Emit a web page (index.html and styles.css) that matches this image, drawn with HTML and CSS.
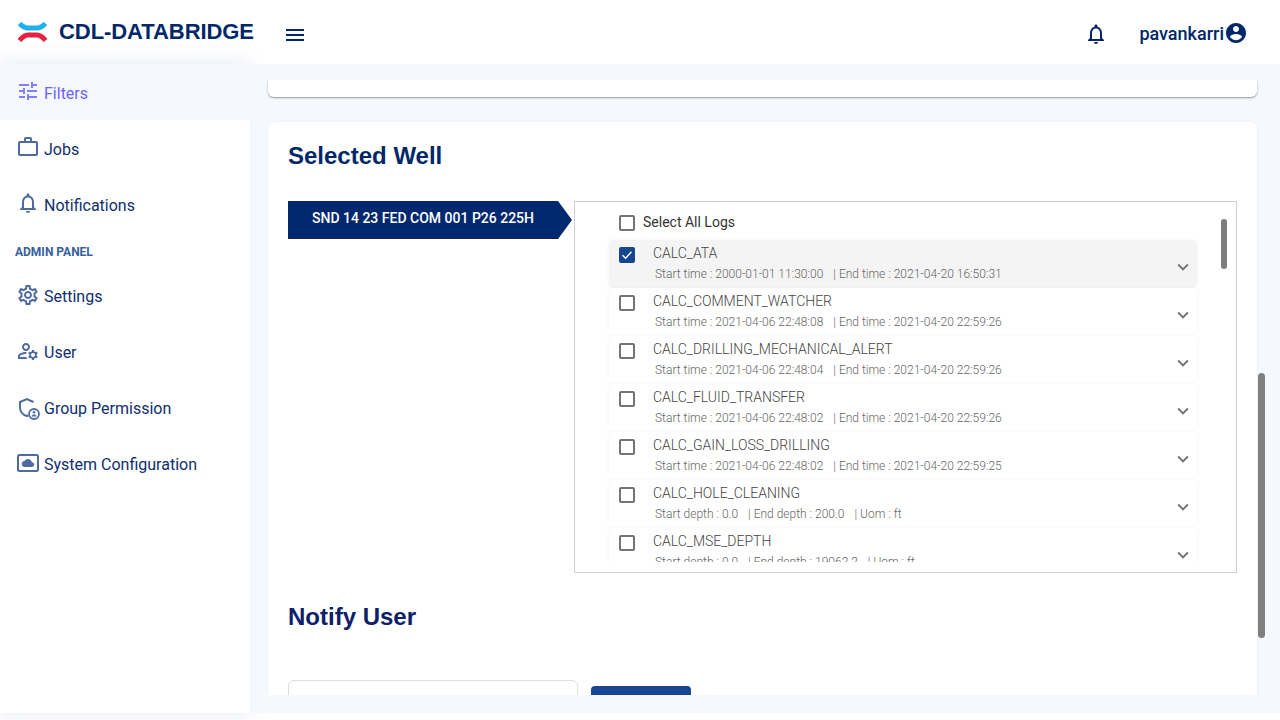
FILE: index.html
```html
<!DOCTYPE html>
<html lang="en">
<head>
    <meta charset="UTF-8">
    <meta name="viewport" content="width=device-width, initial-scale=1.0">
    <title>CDL-DATABRIDGE</title>
    <link rel="stylesheet" href="styles.css">
</head>
<body>
    <header class="topbar">
        <div class="brand">
            <svg class="logo" viewBox="0 0 31 24">
                <path class="logo-top" d="M2.5 3.5 Q7 8 11 8 H20 Q24 8 28.5 3.5"/>
                <path class="logo-bottom" d="M2.5 20.5 Q7 15 11 15 H20 Q24 15 28.5 20.5"/>
            </svg>
            <span class="brand-name">CDL-DATABRIDGE</span>
        </div>
        <svg class="menu-icon" viewBox="0 0 24 24"><path d="M3 18h18v-2H3v2zm0-5h18v-2H3v2zm0-7v2h18V6H3z"/></svg>
        <div class="topbar-right">
            <svg class="top-bell" viewBox="0 0 24 24"><path d="M12 22c1.1 0 2-.9 2-2h-4c0 1.1.9 2 2 2zm6-6v-5c0-3.07-1.63-5.64-4.5-6.32V4c0-.83-.67-1.5-1.5-1.5s-1.5.67-1.5 1.5v.68C7.64 5.36 6 7.92 6 11v5l-2 2v1h16v-1l-2-2zm-2 1H8v-6c0-2.48 1.51-4.5 4-4.5s4 2.02 4 4.5v6z"/></svg>
            <div class="account">
                <span>pavankarri</span>
                <svg viewBox="0 0 24 24"><path d="M12 2C6.48 2 2 6.48 2 12s4.48 10 10 10 10-4.48 10-10S17.52 2 12 2zm0 3c1.66 0 3 1.34 3 3s-1.34 3-3 3-3-1.34-3-3 1.34-3 3-3zm0 14.2c-2.5 0-4.71-1.28-6-3.22.03-1.99 4-3.08 6-3.08 1.99 0 5.97 1.09 6 3.08-1.29 1.94-3.5 3.22-6 3.22z"/></svg>
            </div>
        </div>
    </header>

    <div class="shell">
        <nav class="sidebar">
            <a class="nav-item upper active">
                <svg viewBox="0 0 24 24"><path d="M3 17v2h6v-2H3zM3 5v2h10V5H3zm10 16v-2h8v-2h-8v-2h-2v6h2zM7 9v2H3v2h4v2h2V9H7zm14 4v-2H11v2h10zm-6-4h2V7h4V5h-4V3h-2v6z"/></svg>
                Filters
            </a>
            <a class="nav-item upper">
                <svg viewBox="0 0 24 24"><path d="M14 6V4h-4v2h4zM4 8v11h16V8H4zm16-2c1.11 0 2 .89 2 2v11c0 1.11-.89 2-2 2H4c-1.11 0-2-.89-2-2l.01-11c0-1.11.88-2 1.99-2h4V4c0-1.11.89-2 2-2h4c1.11 0 2 .89 2 2v2h4z"/></svg>
                Jobs
            </a>
            <a class="nav-item upper">
                <svg viewBox="0 0 24 24"><path d="M12 22c1.1 0 2-.9 2-2h-4c0 1.1.9 2 2 2zm6-6v-5c0-3.07-1.63-5.64-4.5-6.32V4c0-.83-.67-1.5-1.5-1.5s-1.5.67-1.5 1.5v.68C7.64 5.36 6 7.92 6 11v5l-2 2v1h16v-1l-2-2zm-2 1H8v-6c0-2.48 1.51-4.5 4-4.5s4 2.02 4 4.5v6z"/></svg>
                Notifications
            </a>
            <div class="nav-label">ADMIN PANEL</div>
            <a class="nav-item">
                <svg viewBox="0 0 24 24"><path d="M19.43 12.98c.04-.32.07-.64.07-.98 0-.34-.03-.66-.07-.98l2.11-1.65c.19-.15.24-.42.12-.64l-2-3.46c-.09-.16-.26-.25-.44-.25-.06 0-.12.01-.17.03l-2.49 1c-.52-.4-1.08-.73-1.69-.98l-.38-2.65C14.46 2.18 14.25 2 14 2h-4c-.25 0-.46.18-.49.42l-.38 2.65c-.61.25-1.17.59-1.69.98l-2.49-1c-.06-.02-.12-.03-.18-.03-.17 0-.34.09-.43.25l-2 3.46c-.13.22-.07.49.12.64l2.11 1.65c-.04.32-.07.65-.07.98 0 .33.03.66.07.98l-2.11 1.65c-.19.15-.24.42-.12.64l2 3.46c.09.16.26.25.44.25.06 0 .12-.01.17-.03l2.49-1c.52.4 1.08.73 1.69.98l.38 2.65c.03.24.24.42.49.42h4c.25 0 .46-.18.49-.42l.38-2.65c.61-.25 1.17-.59 1.69-.98l2.49 1c.06.02.12.03.18.03.17 0 .34-.09.43-.25l2-3.46c.12-.22.07-.49-.12-.64l-2.11-1.65zm-1.98-1.71c.04.31.05.52.05.73 0 .21-.02.43-.05.73l-.14 1.13.89.7 1.08.84-.7 1.21-1.27-.51-1.04-.42-.9.68c-.43.32-.84.56-1.25.73l-1.06.43-.16 1.13-.2 1.35h-1.4l-.19-1.35-.16-1.13-1.06-.43c-.43-.18-.83-.41-1.23-.71l-.91-.7-1.06.43-1.27.51-.7-1.21 1.08-.84.89-.7-.14-1.13c-.03-.31-.05-.54-.05-.74s.02-.43.05-.73l.14-1.13-.89-.7-1.08-.84.7-1.21 1.27.51 1.04.42.9-.68c.43-.32.84-.56 1.25-.73l1.06-.43.16-1.13.2-1.35h1.39l.19 1.35.16 1.13 1.06.43c.43.18.83.41 1.23.71l.91.7 1.06-.43 1.27-.51.7 1.21-1.07.85-.89.7.14 1.13zM12 8c-2.21 0-4 1.79-4 4s1.79 4 4 4 4-1.79 4-4-1.79-4-4-4zm0 6c-1.1 0-2-.9-2-2s.9-2 2-2 2 .9 2 2-.9 2-2 2z"/></svg>
                Settings
            </a>
            <a class="nav-item">
                <svg viewBox="0 0 24 24"><path d="M4 18v-.65c0-.34.16-.66.41-.81C6.1 15.53 8.03 15 10 15c.03 0 .05 0 .08.01.1-.7.3-1.37.59-1.98-.22-.02-.44-.03-.67-.03-2.42 0-4.68.67-6.61 1.82-.88.52-1.39 1.5-1.39 2.53V20h9.26c-.42-.6-.75-1.28-.97-2H4zm6-6c2.21 0 4-1.79 4-4s-1.79-4-4-4-4 1.79-4 4 1.79 4 4 4zm0-6c1.1 0 2 .9 2 2s-.9 2-2 2-2-.9-2-2 .9-2 2-2zm10.75 10c0-.22-.03-.42-.06-.63l1.14-1.01-1-1.73-1.45.49c-.32-.27-.68-.48-1.08-.63L18 11h-2l-.3 1.49c-.4.15-.76.36-1.08.63l-1.45-.49-1 1.73 1.14 1.01c-.03.21-.06.41-.06.63s.03.42.06.63l-1.14 1.01 1 1.73 1.45-.49c.32.27.68.48 1.08.63L16 21h2l.3-1.49c.4-.15.76-.36 1.08-.63l1.45.49 1-1.73-1.14-1.01c.03-.21.06-.41.06-.63zM17 18c-1.1 0-2-.9-2-2s.9-2 2-2 2 .9 2 2-.9 2-2 2z"/></svg>
                User
            </a>
            <a class="nav-item">
                <svg class="icon-group" viewBox="0 0 24 24">
                    <path fill="none" stroke="currentColor" stroke-width="2" d="M17.5 6 L11 3 L4 6 V11.2 C4 15.4 6.8 19 11 20 L12.5 19.5"/>
                    <circle cx="18" cy="18" r="5" fill="none" stroke="currentColor" stroke-width="1.8"/>
                    <circle cx="18" cy="16.3" r="1.3"/>
                    <path d="M15.5 20.5c.3-1.3 1.3-1.9 2.5-1.9s2.2.6 2.5 1.9z"/>
                </svg>
                Group Permission
            </a>
            <a class="nav-item">
                <svg viewBox="0 0 24 24">
                    <rect x="2" y="4" width="20" height="16" rx="1.5" fill="none" stroke="currentColor" stroke-width="2"/>
                    <path d="M15.9 11.2C15.5 9.3 13.9 8 12 8c-1.5 0-2.8.8-3.5 2.1C6.9 10.3 5.8 11.5 5.8 13c0 1.7 1.4 3 3 3h6.9c1.4 0 2.5-1.1 2.5-2.5 0-1.3-1-2.2-2.3-2.3z"/>
                </svg>
                System Configuration
            </a>
        </nav>

        <main class="content">
            <div class="content-scroll">
                <div class="card-stub"></div>
                <section class="card">
                    <h2 class="card-title">Selected Well</h2>
                    <div class="well-row">
                        <div class="well-tag">SND 14 23 FED COM 001 P26 225H</div>
                        <div class="log-box">
                            <div class="log-scroll">
                                <label class="select-all"><span class="check"></span><span class="select-text">Select All Logs</span></label>

                                <div class="log-row selected">
                                    <span class="check checked"><svg viewBox="0 0 16 16"><path d="M3.5 8.2 L6.6 11.2 L12.5 4.8"/></svg></span>
                                    <div class="log-text">
                                        <div class="log-name">CALC_ATA</div>
                                        <div class="log-meta"><span>Start time : 2000-01-01 11:30:00</span><span>| End time : 2021-04-20 16:50:31</span></div>
                                    </div>
                                    <svg class="chevron" viewBox="0 0 24 24"><path d="M16.59 8.59L12 13.17 7.41 8.59 6 10l6 6 6-6z"/></svg>
                                </div>
                                <div class="log-row">
                                    <span class="check"></span>
                                    <div class="log-text">
                                        <div class="log-name">CALC_COMMENT_WATCHER</div>
                                        <div class="log-meta"><span>Start time : 2021-04-06 22:48:08</span><span>| End time : 2021-04-20 22:59:26</span></div>
                                    </div>
                                    <svg class="chevron" viewBox="0 0 24 24"><path d="M16.59 8.59L12 13.17 7.41 8.59 6 10l6 6 6-6z"/></svg>
                                </div>
                                <div class="log-row">
                                    <span class="check"></span>
                                    <div class="log-text">
                                        <div class="log-name">CALC_DRILLING_MECHANICAL_ALERT</div>
                                        <div class="log-meta"><span>Start time : 2021-04-06 22:48:04</span><span>| End time : 2021-04-20 22:59:26</span></div>
                                    </div>
                                    <svg class="chevron" viewBox="0 0 24 24"><path d="M16.59 8.59L12 13.17 7.41 8.59 6 10l6 6 6-6z"/></svg>
                                </div>
                                <div class="log-row">
                                    <span class="check"></span>
                                    <div class="log-text">
                                        <div class="log-name">CALC_FLUID_TRANSFER</div>
                                        <div class="log-meta"><span>Start time : 2021-04-06 22:48:02</span><span>| End time : 2021-04-20 22:59:26</span></div>
                                    </div>
                                    <svg class="chevron" viewBox="0 0 24 24"><path d="M16.59 8.59L12 13.17 7.41 8.59 6 10l6 6 6-6z"/></svg>
                                </div>
                                <div class="log-row">
                                    <span class="check"></span>
                                    <div class="log-text">
                                        <div class="log-name">CALC_GAIN_LOSS_DRILLING</div>
                                        <div class="log-meta"><span>Start time : 2021-04-06 22:48:02</span><span>| End time : 2021-04-20 22:59:25</span></div>
                                    </div>
                                    <svg class="chevron" viewBox="0 0 24 24"><path d="M16.59 8.59L12 13.17 7.41 8.59 6 10l6 6 6-6z"/></svg>
                                </div>
                                <div class="log-row">
                                    <span class="check"></span>
                                    <div class="log-text">
                                        <div class="log-name">CALC_HOLE_CLEANING</div>
                                        <div class="log-meta"><span>Start depth : 0.0</span><span>| End depth : 200.0</span><span>| Uom : ft</span></div>
                                    </div>
                                    <svg class="chevron" viewBox="0 0 24 24"><path d="M16.59 8.59L12 13.17 7.41 8.59 6 10l6 6 6-6z"/></svg>
                                </div>
                                <div class="log-row">
                                    <span class="check"></span>
                                    <div class="log-text">
                                        <div class="log-name">CALC_MSE_DEPTH</div>
                                        <div class="log-meta"><span>Start depth : 0.0</span><span>| End depth : 19062.2</span><span>| Uom : ft</span></div>
                                    </div>
                                    <svg class="chevron" viewBox="0 0 24 24"><path d="M16.59 8.59L12 13.17 7.41 8.59 6 10l6 6 6-6z"/></svg>
                                </div>
                            </div>
                            <div class="log-thumb"></div>
                        </div>
                    </div>

                    <h2 class="card-title notify-title">Notify User</h2>
                    <div class="notify-row">
                        <div class="notify-input"></div>
                        <div class="notify-btn"></div>
                    </div>
                </section>
            </div>
            <div class="page-thumb"></div>
        </main>
    </div>
</body>
</html>
```

FILE: styles.css
```css
* {
    box-sizing: border-box;
}
body {
    margin: 0;
    height: 720px;
    overflow: hidden;
    background: #fff;
    font-family: "Roboto", sans-serif;
    color: #002868;
}
svg {
    fill: currentColor;
    flex: none;
}

/* top bar */
.topbar {
    height: 64px;
    display: flex;
    align-items: center;
    background: #fff;
}
.brand {
    width: 283px;
    padding-left: 17px;
    display: flex;
    align-items: center;
    gap: 11px;
}
.logo {
    width: 31px;
    height: 24px;
    fill: none;
    stroke-width: 5;
}
.logo-top {
    stroke: #1fb2ea;
}
.logo-bottom {
    stroke: #e8213f;
}
.brand-name {
    margin-top: -1px;
    font-family: "Liberation Sans", sans-serif;
    font-weight: 700;
    font-size: 22px;
    letter-spacing: -0.07px;
    color: #002868;
}
.menu-icon {
    width: 24px;
    height: 24px;
    margin-top: 6px;
}
.topbar-right {
    margin-left: auto;
    display: flex;
    align-items: center;
    padding-right: 32px;
}
.top-bell {
    width: 24px;
    height: 24px;
    margin-top: 4px;
    color: #0b2265;
}
.account {
    margin-left: 31px;
    display: flex;
    align-items: center;
    margin-top: 2px;
    font-size: 18px;
    font-weight: 500;
}
.account svg {
    width: 24px;
    height: 24px;
}

.shell {
    display: flex;
    height: 649px;
}

/* side menu */
.sidebar {
    width: 250px;
    flex: none;
    background: #fff;
    box-shadow: 0 0 20px rgba(70, 90, 170, 0.14);
    position: relative;
}
.nav-item {
    height: 56px;
    padding-left: 16px;
    display: flex;
    align-items: center;
    gap: 4px;
    font-size: 16px;
    color: #0f2f6e;
}
.nav-item svg {
    width: 24px;
    height: 24px;
    margin-top: -2px;
    color: #4f6b9f;
}
.nav-item.upper {
    padding-top: 2px;
}
.nav-item.upper svg {
    margin-top: -4px;
}
.nav-item .icon-group {
    margin-top: 0;
}
.nav-item.active {
    background: #f5f8ff;
    color: #6c63ff;
}
.nav-item.active svg {
    color: #7f7fff;
}
.nav-label {
    height: 36px;
    padding: 13px 0 0 15px;
    font-size: 12px;
    font-weight: 700;
    color: #35619c;
}

/* content */
.content {
    flex: 1;
    position: relative;
    background: #f5f8ff;
    padding: 16px 0 18px;
}
.content-scroll {
    height: 100%;
    overflow: hidden;
    padding: 0 23px 0 18px;
}
.card-stub {
    height: 17px;
    background: #fff;
    border-radius: 0 0 6px 6px;
    box-shadow: 0 1px 2px rgba(0, 0, 0, 0.4);
}
.card {
    margin-top: 25px;
    padding: 20px;
    height: 640px;
    background: #fff;
    border-radius: 6px;
    box-shadow: 0 0 2px rgba(0, 0, 0, 0.08);
}
.card-title {
    margin: 0;
    font-family: "Liberation Sans", sans-serif;
    font-size: 24px;
    line-height: 28px;
    font-weight: 700;
    color: #002868;
}
.well-row {
    display: flex;
    align-items: flex-start;
    gap: 2px;
    margin-top: 31px;
}
.well-tag {
    width: 284px;
    height: 38px;
    padding: 8px 14px 0 0;
    text-align: center;
    font-size: 14px;
    line-height: 18px;
    font-weight: 500;
    color: #fff;
    background: #00286e;
    border-bottom: 1px solid #1c2340;
    clip-path: polygon(0 0, 270px 0, 284px 50%, 270px 100%, 0 100%);
}
.log-box {
    flex: 1;
    height: 372px;
    position: relative;
    border: 1px solid #cfcfcf;
    padding-bottom: 10px;
}
.log-scroll {
    height: 100%;
    overflow: hidden;
    padding-left: 34px;
}
.select-all {
    height: 38px;
    padding: 4px 0 0 10px;
    display: flex;
    align-items: center;
    gap: 8px;
    font-size: 14px;
    color: #333;
}
.select-text {
    margin-top: -2px;
}
.check {
    width: 16px;
    height: 16px;
    flex: none;
    border: 2px solid #757575;
    border-radius: 2px;
    background: #fff;
}
.check.checked {
    border: none;
    background: #17458f;
}
.check.checked svg {
    display: block;
    width: 16px;
    height: 16px;
    fill: none;
    stroke: #fff;
    stroke-width: 1.4;
}
.log-row {
    width: 588px;
    height: 48px;
    padding: 7px 2px 0 10px;
    display: flex;
    align-items: flex-start;
    background: #fff;
    border-radius: 5px;
    box-shadow: 0 0 4px rgba(0, 0, 0, 0.05);
}
.log-row.selected {
    background: #f4f4f4;
}
.log-text {
    flex: 1;
    margin-left: 18px;
}
.log-name {
    margin-top: -1px;
    font-size: 14px;
    line-height: 14px;
    font-weight: 300;
    color: #444;
}
.log-meta {
    margin: 7px 0 0 2px;
    font-size: 12px;
    line-height: 14px;
    font-weight: 300;
    color: #666;
}
.log-meta span + span {
    margin-left: 10px;
}
.chevron {
    width: 22px;
    height: 22px;
    margin-top: 9px;
    margin-right: 1px;
    color: #757575;
}
.log-thumb {
    position: absolute;
    top: 17px;
    right: 9px;
    width: 6px;
    height: 50px;
    border-radius: 3px;
    background: #7d7d7d;
}
.notify-title {
    margin-top: 30px;
    color: #0c2068;
}
.notify-row {
    display: flex;
    align-items: flex-start;
    gap: 13px;
    margin-top: 49px;
}
.notify-input {
    width: 290px;
    height: 50px;
    border: 1px solid #ddd;
    border-radius: 6px;
}
.notify-btn {
    width: 100px;
    height: 40px;
    margin-top: 6px;
    background: #17458f;
    border-radius: 4px;
}
.page-thumb {
    position: absolute;
    top: 309px;
    right: 15px;
    width: 7px;
    height: 265px;
    border-radius: 4px;
    background: #7f7f7f;
}
```
